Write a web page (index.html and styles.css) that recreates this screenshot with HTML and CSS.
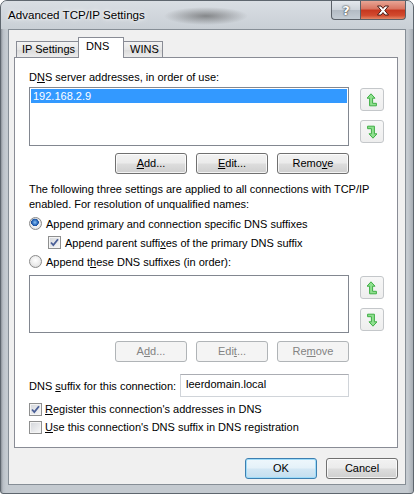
FILE: index.html
```html
<!DOCTYPE html>
<html lang="en">
<head>
  <meta charset="UTF-8">
  <title>Advanced TCP/IP Settings</title>
  <link rel="stylesheet" href="styles.css">
</head>
<body>

  <div class="window">

    <!-- Title bar -->
    <div class="titlebar">
      <span class="title">Advanced TCP/IP Settings</span>
      <div class="caption-buttons">
        <div class="cap-btn help">?</div>
        <div class="cap-btn close">
          <svg width="14" height="11" viewBox="0 0 14 11">
            <path d="M1.5 1 H5 L7 3.4 L9 1 H12.5 L8.8 5.5 L12.5 10 H9 L7 7.6 L5 10 H1.5 L5.2 5.5 Z" fill="#fff" stroke="#4a1a14" stroke-width="1" stroke-linejoin="round"/>
          </svg>
        </div>
      </div>
    </div>

    <div class="client">

      <!-- Tabs -->
      <div class="tabs">
        <div class="tab">IP Settings</div>
        <div class="tab active">DNS</div>
        <div class="tab">WINS</div>
      </div>

      <div class="panel">
        <div class="label">D<u>N</u>S server addresses, in order of use:</div>

        <div class="list-row">
          <div class="listbox">
            <div class="list-item selected">192.168.2.9</div>
          </div>
          <div class="arrows">
            <div class="arrow-btn">
              <svg width="10" height="14" viewBox="0 0 10 14"><path class="arrow" d="M4 0.8 L8 5.2 H5.6 V10.3 H9.4 V12.8 H2.6 V5.2 H0 Z"/></svg>
            </div>
            <div class="arrow-btn">
              <svg width="10" height="14" viewBox="0 0 10 14"><path class="arrow" d="M6 13.2 L2 8.8 H4.4 V3.7 H0.6 V1.2 H7.4 V8.8 H10 Z"/></svg>
            </div>
          </div>
        </div>

        <div class="button-row">
          <div class="btn"><u>A</u>dd...</div>
          <div class="btn"><u>E</u>dit...</div>
          <div class="btn">Remo<u>v</u>e</div>
        </div>

        <p class="info">The following three settings are applied to all connections with TCP/IP<br>enabled. For resolution of unqualified names:</p>

        <div class="options">
          <div class="option">
            <span class="radio checked"></span>
            <span>Append <u>p</u>rimary and connection specific DNS suffixes</span>
          </div>
          <div class="option indent">
            <span class="check checked">
              <svg width="9" height="9" viewBox="0 0 9 9"><path d="M1 4.5 L3.3 7 L8 1.2" fill="none" stroke="#4a5f97" stroke-width="1.8"/></svg>
            </span>
            <span>Append parent suffi<u>x</u>es of the primary DNS suffix</span>
          </div>
          <div class="option">
            <span class="radio"></span>
            <span>Append t<u>h</u>ese DNS suffixes (in order):</span>
          </div>
        </div>

        <div class="list-row second">
          <div class="listbox short"></div>
          <div class="arrows">
            <div class="arrow-btn">
              <svg width="10" height="14" viewBox="0 0 10 14"><path class="arrow" d="M4 0.8 L8 5.2 H5.6 V10.3 H9.4 V12.8 H2.6 V5.2 H0 Z"/></svg>
            </div>
            <div class="arrow-btn">
              <svg width="10" height="14" viewBox="0 0 10 14"><path class="arrow" d="M6 13.2 L2 8.8 H4.4 V3.7 H0.6 V1.2 H7.4 V8.8 H10 Z"/></svg>
            </div>
          </div>
        </div>

        <div class="button-row lower">
          <div class="btn disabled">A<u>d</u>d...</div>
          <div class="btn disabled">Edi<u>t</u>...</div>
          <div class="btn disabled">Re<u>m</u>ove</div>
        </div>

        <div class="suffix-row">
          <span class="suffix-label">DNS <u>s</u>uffix for this connection:</span>
          <div class="textbox">leerdomain.local</div>
        </div>

        <div class="checks">
          <div class="check-row">
            <span class="check checked">
              <svg width="9" height="9" viewBox="0 0 9 9"><path d="M1 4.5 L3.3 7 L8 1.2" fill="none" stroke="#4a5f97" stroke-width="1.8"/></svg>
            </span>
            <span><u>R</u>egister this connection's addresses in DNS</span>
          </div>
          <div class="check-row">
            <span class="check"></span>
            <span><u>U</u>se this connection's DNS suffix in DNS registration</span>
          </div>
        </div>
      </div>

      <!-- Dialog buttons -->
      <div class="dialog-buttons">
        <div class="btn default">OK</div>
        <div class="btn">Cancel</div>
      </div>
    </div>
  </div>

</body>
</html>
```

FILE: styles.css
```css
body {
  margin: 0;
  padding: 0;
  background: #ffffff;
  font-family: "Liberation Sans", Arial, sans-serif;
  font-size: 11px;
  color: #000;
}

u {
  text-decoration: underline;
  text-underline-offset: 1px;
}

/* Window frame */
.window {
  width: 414px;
  height: 494px;
  box-sizing: border-box;
  display: flex;
  flex-direction: column;
  border: 1px solid #5e666e;
  border-radius: 7px 7px 3px 3px;
  background: linear-gradient(90deg, #8c9299 0px, #b9bfc6 2px, #c4cad0 5px, #c4cad0 calc(100% - 5px), #a8aeb5 100%);
  overflow: hidden;
}

.titlebar {
  height: 28px;
  display: flex;
  align-items: flex-start;
  padding: 0 7px 0 7px;
  background:
    radial-gradient(ellipse 42px 9px at 205px 15px, rgba(70, 70, 70, 0.55), rgba(70, 70, 70, 0)),
    linear-gradient(#d9dee3, #c9cfd5);
}

.title {
  font-size: 11.6px;
  line-height: 28px;
  color: #000;
  text-shadow: 0 0 6px #fff, 0 0 3px #fff;
}

.caption-buttons {
  margin-left: auto;
  display: flex;
  height: 20px;
}

.cap-btn {
  height: 19px;
  box-sizing: border-box;
  border: 1px solid #5a6068;
  border-top: none;
  display: flex;
  align-items: center;
  justify-content: center;
}

.help {
  width: 29px;
  border-right: none;
  border-radius: 0 0 0 4px;
  background: linear-gradient(#e3e8ed 0%, #cdd3da 50%, #b3bbc4 51%, #c4ccd4 100%);
  color: #fff;
  font-family: "DejaVu Sans", sans-serif;
  font-size: 13px;
  font-weight: bold;
  text-shadow: 0 0 1px #333, 0 0 2px #333;
}

.close {
  width: 46px;
  border-radius: 0 0 4px 0;
  background: linear-gradient(#e8a595 0%, #d8735f 45%, #c6371f 50%, #d24a2e 80%, #e48766 100%);
}

/* Client area */
.client {
  flex: 1;
  margin: 0 7px 8px 7px;
  border: 1px solid #868e96;
  background: #f0f0f0;
  padding: 7px 7px 0 5px;
  display: flex;
  flex-direction: column;
}

.tabs {
  display: flex;
  align-items: flex-end;
  height: 20px;
  padding-left: 2px;
}

.tab {
  height: 16px;
  box-sizing: border-box;
  border: 1px solid #898c95;
  border-bottom: none;
  background: linear-gradient(#f3f3f3, #e6e6e6 50%, #dadada 51%, #ececec);
  padding: 0 0 0 5px;
  line-height: 15px;
  white-space: nowrap;
}

.tab:first-child {
  width: 62px;
  border-right: none;
}

.tab:last-child {
  width: 39px;
  border-left: none;
  padding-left: 6px;
}

.tab.active {
  width: 46px;
  height: 21px;
  margin-bottom: -1px;
  background: #fff;
  position: relative;
  z-index: 1;
  line-height: 17px;
  padding: 0 0 0 7px;
}

.panel {
  height: 391px;
  box-sizing: border-box;
  border: 1px solid #898c95;
  background: #fff;
  padding: 12px 13px 0 14px;
}

.label {
  line-height: 15px;
}

/* Lists and arrows */
.list-row {
  display: flex;
  gap: 11px;
  margin-top: 2px;
}

.list-row.second {
  margin-top: 4px;
}

.listbox {
  width: 320px;
  height: 59px;
  box-sizing: border-box;
  border: 1px solid #828790;
  background: #fff;
  padding: 1px;
}

.listbox.short {
  height: 58px;
}

.list-item {
  height: 14px;
  line-height: 14px;
  padding-left: 2px;
}

.list-item.selected {
  background: #3399ff;
  color: #fff;
}

.arrows {
  display: flex;
  flex-direction: column;
  gap: 9px;
  padding-top: 1px;
}

.arrow-btn {
  width: 24px;
  height: 23px;
  box-sizing: border-box;
  border: 1px solid #c4c7ca;
  border-radius: 3px;
  background: linear-gradient(#f7f7f7, #eeeeee);
  display: flex;
  align-items: center;
  justify-content: center;
}

.arrow {
  fill: #8fe08f;
  stroke: #3fae45;
  stroke-width: 1;
  stroke-linejoin: round;
}

/* Buttons */
.button-row {
  width: 320px;
  display: flex;
  justify-content: flex-end;
  gap: 9px;
  margin-top: 7px;
}

.button-row.lower {
  margin-top: 8px;
}

.btn {
  width: 72px;
  height: 21px;
  box-sizing: border-box;
  border: 1px solid #707070;
  border-radius: 3px;
  background: linear-gradient(#f2f2f2 0%, #ebebeb 48%, #dddddd 52%, #cfcfcf 100%);
  box-shadow: inset 0 0 0 1px rgba(255, 255, 255, 0.75);
  text-align: center;
  line-height: 19px;
}

.btn.disabled {
  border-color: #b0b4b7;
  background: #f4f4f4;
  box-shadow: none;
  color: #838383;
}

.btn.default {
  border-color: #3c7fb1;
  box-shadow: inset 0 0 0 1px #9fdcf9;
  background: linear-gradient(#eef7fc 0%, #e4f1f9 48%, #d3e7f4 52%, #c4deef 100%);
}

/* Text and options */
.info {
  margin: 8px 0 0 0;
  line-height: 15px;
  white-space: nowrap;
}

.options {
  margin-top: 2px;
}

.option {
  height: 19px;
  display: flex;
  align-items: center;
  gap: 4px;
}

.option.indent {
  padding-left: 19px;
}

.radio {
  width: 13px;
  height: 13px;
  box-sizing: border-box;
  border-radius: 50%;
  border: 1px solid #8a8a8a;
  background: radial-gradient(circle at 50% 40%, #ffffff 0%, #e9e9e9 60%, #cfcfcf 100%);
}

.radio.checked {
  background:
    radial-gradient(circle at 45% 40%, #8fc3f1 0px, #2f6fc0 2.5px, #1c4e9a 3.6px, rgba(0, 0, 0, 0) 4px),
    radial-gradient(circle, #ffffff 0%, #eaeaea 60%, #d0d0d0 100%);
}

.check {
  width: 13px;
  height: 13px;
  box-sizing: border-box;
  border: 1px solid #8e8f8f;
  background: linear-gradient(135deg, #d2d5da, #f8f8f8);
  box-shadow: inset 0 0 0 1px #f4f4f4;
  display: flex;
  align-items: center;
  justify-content: center;
}

.suffix-row {
  display: flex;
  align-items: center;
  margin-top: 12px;
  height: 23px;
}

.suffix-label {
  width: 151px;
}

.textbox {
  width: 169px;
  height: 23px;
  box-sizing: border-box;
  border: 1px solid #d0d4d9;
  border-top-color: #abadb3;
  background: #fff;
  padding-left: 5px;
  line-height: 19px;
}

.checks {
  margin-top: 3px;
}

.check-row {
  height: 18px;
  display: flex;
  align-items: center;
  gap: 3px;
}

/* Bottom buttons */
.dialog-buttons {
  display: flex;
  justify-content: flex-end;
  gap: 9px;
  margin-top: 10px;
}
```
